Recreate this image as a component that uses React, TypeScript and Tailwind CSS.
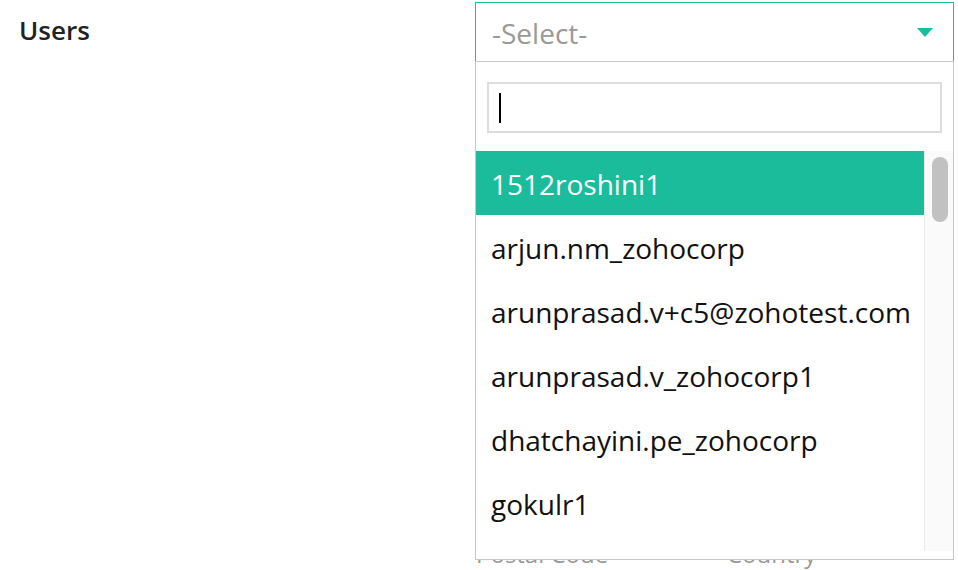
import React from 'react';

const users = [
  '1512roshini1',
  'arjun.nm_zohocorp',
  'arunprasad.v+c5@zohotest.com',
  'arunprasad.v_zohocorp1',
  'dhatchayini.pe_zohocorp',
  'gokulr1',
  'harish.k_zohocorp',
];

const App = () => {
  return (
    <div className="relative w-[958px] h-[570px] overflow-hidden bg-white font-['Open_Sans',sans-serif]">
      {/* Form behind the dropdown */}
      <div className="flex flex-col">
        <div className="flex items-start pt-[2px]">
          <div className="w-[475px] pl-[19px] pt-[12px] text-[26px] font-semibold text-[#222] leading-[32px]">
            Users
          </div>
          <div className="w-[479px] h-[60px] border border-[#1abc9c] flex items-center justify-between pl-[16px] pr-[20px]">
            <span className="text-[28px] text-[#999] leading-none pt-[2px]">-Select-</span>
            <svg width="16" height="9" viewBox="0 0 16 9">
              <path d="M0 0 L16 0 L8 9 Z" fill="#1abc9c" />
            </svg>
          </div>
        </div>

        <div className="flex mt-[476px]">
          <div className="w-[476px]" />
          <div className="w-[251px] text-[24px] text-[#999] leading-[32px]">Postal Code</div>
          <div className="text-[24px] text-[#999] leading-[32px]">Country</div>
        </div>
      </div>

      {/* Open dropdown */}
      <div className="absolute left-[475px] top-[61px] w-[479px] h-[499px] bg-white border border-[#c8c8c8] flex flex-col">
        <div className="px-[11px] pt-[20px] pb-[18px]">
          <div className="h-[51px] border-2 border-[#dddddd] flex items-center pl-[10px]">
            <span className="w-[2px] h-[30px] bg-black" />
          </div>
        </div>
        <div className="flex h-[400px]">
          <ul className="flex-1 overflow-hidden">
            {users.map((u, i) => (
              <li
                key={u}
                className={`h-[64px] flex items-center pl-[15px] pt-[2px] text-[28px] leading-none whitespace-nowrap ${
                  i === 0 ? 'bg-[#1abc9c] text-white' : 'text-[#111]'
                }`}
              >
                {u}
              </li>
            ))}
          </ul>
          <div className="w-[29px] bg-[#fafafa] border-l border-[#e8e8e8] pt-[6px] pl-[7px]">
            <div className="w-[16px] h-[65px] rounded-full bg-[#c1c1c1]" />
          </div>
        </div>
      </div>
    </div>
  );
};

export default App;
